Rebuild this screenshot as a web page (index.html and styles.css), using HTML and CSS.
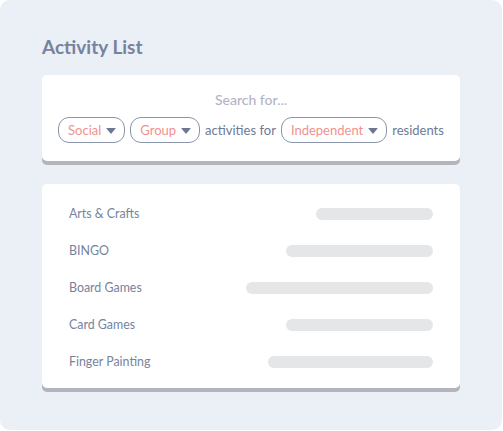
FILE: index.html
```html
<!DOCTYPE html>
<html>
<head>
<meta charset="utf-8">
<link rel="stylesheet" href="styles.css">
</head>
<body>
<div class="panel">
  <h1 class="title">Activity List</h1>
  <div class="card search-card">
    <div class="search-label">Search for...</div>
    <div class="search-row">
      <span class="pill">Social <span class="caret"></span></span>
      <span class="pill">Group <span class="caret"></span></span>
      <span class="word">activities for</span>
      <span class="pill">Independent <span class="caret"></span></span>
      <span class="word">residents</span>
    </div>
  </div>
  <div class="card list-card">
    <div class="row"><span class="name">Arts &amp; Crafts</span><span class="bar" style="width:117px"></span></div>
    <div class="row"><span class="name">BINGO</span><span class="bar" style="width:147px"></span></div>
    <div class="row"><span class="name">Board Games</span><span class="bar" style="width:187px"></span></div>
    <div class="row"><span class="name">Card Games</span><span class="bar" style="width:147px"></span></div>
    <div class="row"><span class="name">Finger Painting</span><span class="bar" style="width:165px"></span></div>
  </div>
</div>
</body>
</html>
```
FILE: styles.css
```css
* { box-sizing: border-box; }
html, body { margin: 0; padding: 0; background: #ffffff; }
body { font-family: Lato, "Open Sans", sans-serif; }
.panel {
  width: 502px;
  height: 430px;
  background: #ebeff6;
  border-radius: 10px;
  padding: 35px 42px 0 42px;
}
.title {
  margin: 0;
  font-size: 19px;
  font-weight: 700;
  color: #76839c;
  line-height: 24px;
  height: 40px;
}
.card {
  background: #ffffff;
  border-radius: 5px;
  box-shadow: 0 4px 0 #b4b4ba;
}
.search-card {
  padding: 16px 0 18px 0;
  display: flex;
  flex-direction: column;
  align-items: center;
}
.search-label {
  font-size: 14px;
  color: #b3b4c6;
  line-height: 18px;
  font-weight: 500;
}
.search-row {
  margin-top: 8px;
  display: flex;
  align-items: center;
  gap: 5px;
}
.pill {
  height: 26px;
  border: 1px solid #8a95ac;
  border-radius: 11px;
  padding: 0 8px 0 9px;
  display: flex;
  align-items: center;
  gap: 5px;
  color: #f2918f;
  font-size: 13px;
}
.caret {
  width: 0; height: 0;
  border-left: 5px solid transparent;
  border-right: 5px solid transparent;
  border-top: 6px solid #6c7892;
  border-radius: 1px;
  margin-top: 1px;
}
.word {
  font-size: 13px;
  color: #6d7a93;
}
.list-card {
  margin-top: 23px;
  padding: 11px 27px 8px 27px;
}
.row {
  height: 37px;
  display: flex;
  align-items: center;
  justify-content: space-between;
}
.name {
  font-size: 12.4px;
  color: #76839c;
}
.bar {
  height: 12px;
  border-radius: 6px;
  background: #e5e6e7;
}
```
